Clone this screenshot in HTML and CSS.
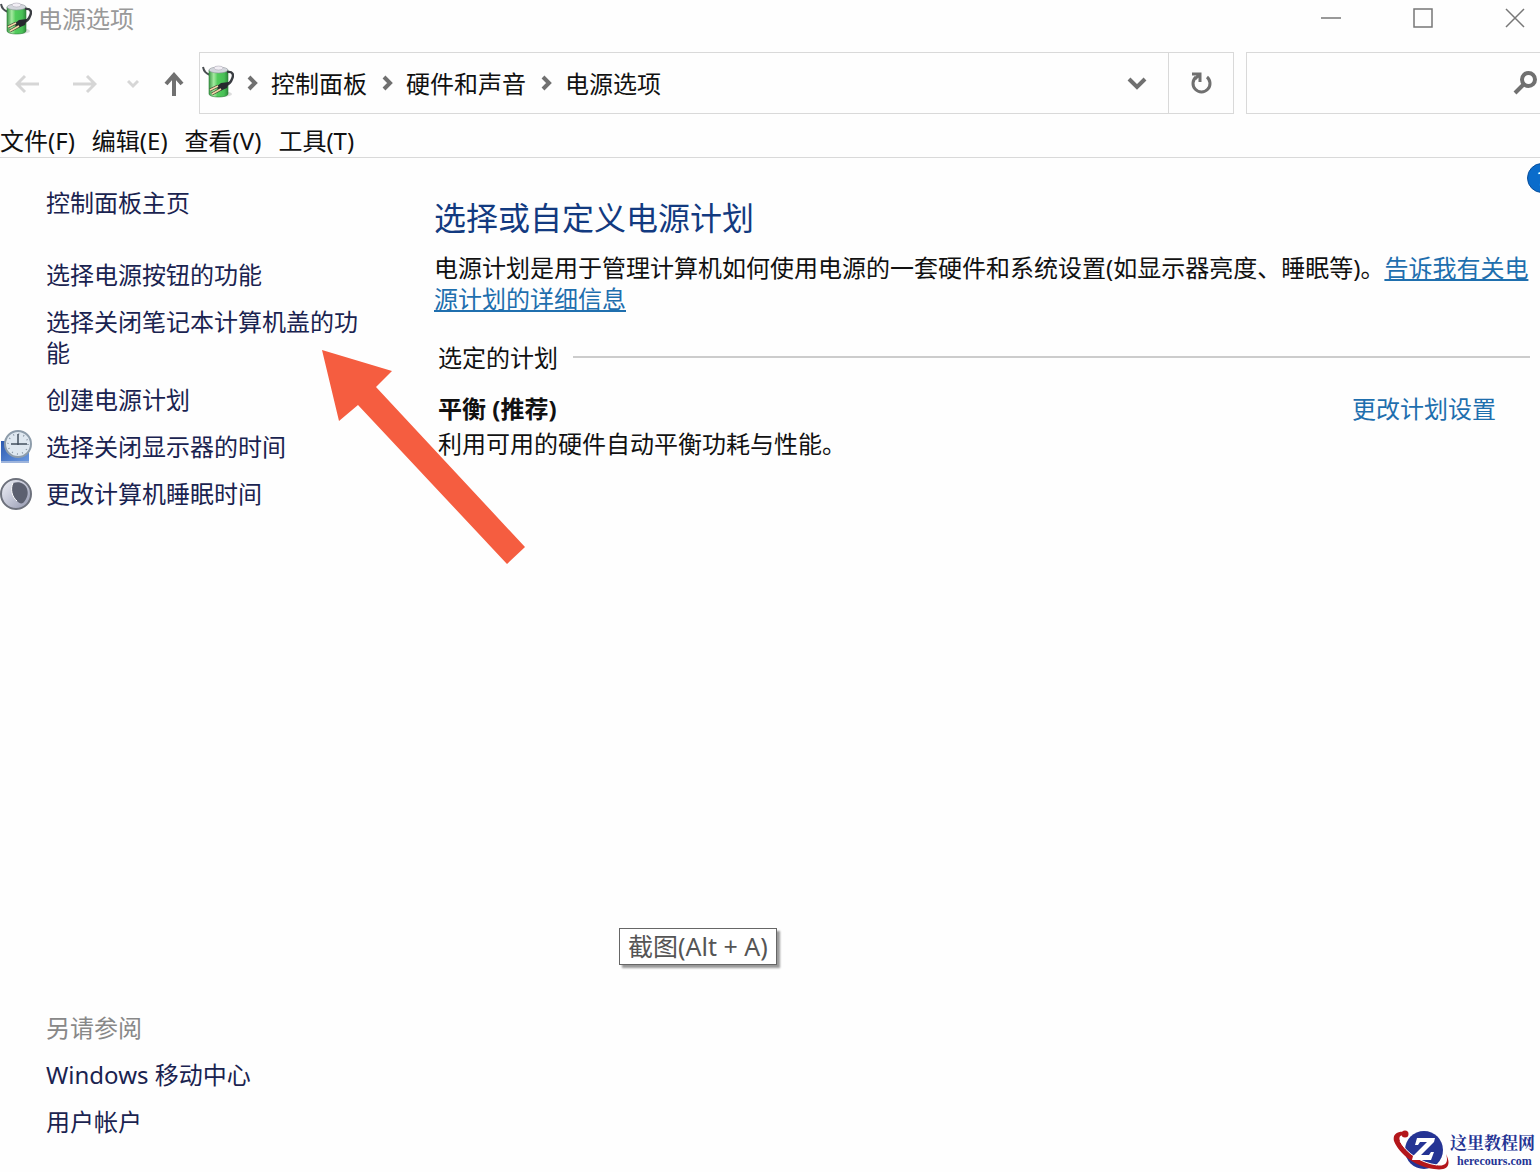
FILE: index.html
```html
<!DOCTYPE html>
<html lang="zh-CN">
<head>
    <meta charset="UTF-8">
    <title>电源选项</title>
    <link rel="stylesheet" href="styles.css">
</head>
<body>
    <!-- shared battery icon -->
    <svg class="defs" width="0" height="0" aria-hidden="true">
        <defs>
            <linearGradient id="cell" x1="0" x2="1" y1="0" y2="0">
                <stop offset="0" stop-color="#3d9a48"/>
                <stop offset="0.25" stop-color="#a5eaa0"/>
                <stop offset="0.45" stop-color="#52cc5c"/>
                <stop offset="0.8" stop-color="#48bf56"/>
                <stop offset="1" stop-color="#2c8a3a"/>
            </linearGradient>
            <linearGradient id="night" x1="0" x2="1" y1="0" y2="1">
                <stop offset="0" stop-color="#f2f3f8"/>
                <stop offset="0.5" stop-color="#c3c6d6"/>
                <stop offset="1" stop-color="#8f93aa"/>
            </linearGradient>
            <linearGradient id="screen" x1="0" x2="1" y1="0" y2="1">
                <stop offset="0" stop-color="#2a58b0"/>
                <stop offset="1" stop-color="#6d9be0"/>
            </linearGradient>
            <symbol id="battery" viewBox="0 0 32 34">
                <ellipse cx="20" cy="30" rx="10" ry="3" fill="#dcdcdc"/>
                <path d="M1 3C2 8 4 9 8 11" fill="none" stroke="#4a4e52" stroke-width="2"/>
                <path d="M7 6v24c0 4 19 4 19 0V6z" fill="url(#cell)" stroke="#2c8038" stroke-width="0.6"/>
                <ellipse cx="16.500" cy="6" rx="9.500" ry="3" fill="#d3d6dc" stroke="#8e949a" stroke-width="0.6"/>
                <ellipse cx="16.500" cy="4" rx="4.500" ry="2" fill="#f1eef4" stroke="#a7a3b0" stroke-width="0.5"/>
                <path d="M25 8C31 7 32 11 30 15C29 18 27 20 24 21" fill="none" stroke="#3a3d42" stroke-width="2.400"/>
                <path d="M27 18L25 24L18 27L14 23L19 19z" fill="#26282e"/>
                <path d="M16 22L8 26M19 25L10 30" stroke="#403a35" stroke-width="3"/>
                <path d="M16 22L8 26M19 25L10 30" stroke="#efd9a5" stroke-width="1.600"/>
            </symbol>
        </defs>
    </svg>

    <div class="window">
        <header class="titlebar">
            <svg class="app-icon"><use href="#battery"/></svg>
            <span class="title">电源选项</span>
            <div class="controls">
                <button class="control" aria-label="最小化"><svg width="22" height="22" viewBox="0 0 22 22"><path d="M1 11h20"/></svg></button>
                <button class="control" aria-label="最大化"><svg width="22" height="22" viewBox="0 0 22 22"><path d="M2 2h18v18H2z"/></svg></button>
                <button class="control" aria-label="关闭"><svg width="22" height="22" viewBox="0 0 22 22"><path d="M2 2l18 18M20 2L2 20"/></svg></button>
            </div>
        </header>

        <nav class="navbar">
            <div class="history">
                <button class="nav-btn faded" aria-label="后退"><svg width="24" height="20" viewBox="0 0 24 20"><path d="M24 10H3M10 2L2 10l8 8"/></svg></button>
                <button class="nav-btn faded" aria-label="前进"><svg width="24" height="20" viewBox="0 0 24 20"><path d="M0 10h21M14 2l8 8-8 8"/></svg></button>
                <button class="nav-btn faded" aria-label="最近位置"><svg width="12" height="10" viewBox="0 0 12 10"><path d="M1 2l5 5 5-5"/></svg></button>
                <button class="nav-btn up" aria-label="向上"><svg width="20" height="24" viewBox="0 0 20 24"><path d="M10 24V3M2 12l8-9 8 9"/></svg></button>
            </div>
            <div class="address">
                <svg class="app-icon"><use href="#battery"/></svg>
                <svg class="sep" width="12" height="16" viewBox="0 0 12 16"><path d="M3 2l6 6-6 6"/></svg>
                <a class="crumb" href="#">控制面板</a>
                <svg class="sep" width="12" height="16" viewBox="0 0 12 16"><path d="M3 2l6 6-6 6"/></svg>
                <a class="crumb" href="#">硬件和声音</a>
                <svg class="sep" width="12" height="16" viewBox="0 0 12 16"><path d="M3 2l6 6-6 6"/></svg>
                <a class="crumb" href="#">电源选项</a>
                <button class="drop" aria-label="展开"><svg width="20" height="14" viewBox="0 0 20 14"><path d="M2 3l8 8 8-8"/></svg></button>
                <button class="refresh" aria-label="刷新"><svg width="22" height="24" viewBox="0 0 22 24"><path d="M17 6a8.500 8.500 0 1 1-11 0"/><path d="M2 3h8v8M9 4L5 8"/></svg></button>
            </div>
            <div class="search">
                <input type="text" aria-label="搜索控制面板">
                <svg width="24" height="24" viewBox="0 0 24 24"><circle cx="15.500" cy="8.500" r="6.500"/><path d="M11 13L2 22"/></svg>
            </div>
        </nav>

        <div class="menubar">
            <button class="menu">文件(F)</button>
            <button class="menu">编辑(E)</button>
            <button class="menu">查看(V)</button>
            <button class="menu">工具(T)</button>
        </div>

        <div class="body">
            <aside class="sidebar">
                <a class="home" href="#">控制面板主页</a>
                <ul class="tasks">
                    <li><a href="#">选择电源按钮的功能</a></li>
                    <li><a href="#">选择关闭笔记本计算机盖的功能</a></li>
                    <li><a href="#">创建电源计划</a></li>
                    <li>
                        <svg class="task-icon" viewBox="0 0 32 34">
                            <path d="M1 11h28v21H1z" fill="url(#screen)"/>
                            <path d="M1 32h28" stroke="#9db4dc" stroke-width="2"/>
                            <circle cx="18" cy="14" r="13" fill="#dfe8f0" stroke="#8e9dab" stroke-width="2"/>
                            <circle cx="18" cy="14" r="10" fill="none" stroke="#8795a3" stroke-width="1.500" stroke-dasharray="1 4.236"/>
                            <path d="M18 4v11M11 14h16" stroke="#44505e" stroke-width="1.500"/>
                        </svg>
                        <a href="#">选择关闭显示器的时间</a>
                    </li>
                    <li>
                        <svg class="task-icon" viewBox="0 0 32 34">
                            <circle cx="16" cy="17" r="15" fill="url(#night)" stroke="#6d717c" stroke-width="2"/>
                            <path d="M13 6C25 2 31 14 26 22C23 28 20 27 17 24C12 20 10 12 13 6z" fill="#5c6070"/>
                            <path d="M13 6C10 12 12 20 17 24" fill="none" stroke="#fff" stroke-width="1"/>
                        </svg>
                        <a href="#">更改计算机睡眠时间</a>
                    </li>
                </ul>
                <div class="see-also">
                    <span class="see-title">另请参阅</span>
                    <a href="#">Windows 移动中心</a>
                    <a href="#">用户帐户</a>
                </div>
            </aside>

            <main class="content">
                <h1>选择或自定义电源计划</h1>
                <p class="intro">电源计划是用于管理计算机如何使用电源的一套硬件和系统设置(如显示器亮度、睡眠等)。<a href="#">告诉我有关电源计划的详细信息</a></p>
                <section class="plans">
                    <h2>选定的计划</h2>
                    <div class="plan">
                        <strong>平衡 (推荐)</strong>
                        <a href="#">更改计划设置</a>
                    </div>
                    <p>利用可用的硬件自动平衡功耗与性能。</p>
                </section>
            </main>
            <button class="help" aria-label="帮助">?</button>
        </div>

        <svg class="arrow" viewBox="0 0 204 216" aria-hidden="true">
            <path d="M0 0L70 21L54 37L203 197L185 214L36 55L17 71z" fill="#f55d40"/>
        </svg>

        <div class="tooltip" role="tooltip">截图(Alt + A)</div>

        <div class="brand">
            <svg width="58" height="42" viewBox="0 0 58 42" aria-hidden="true">
                <circle cx="32" cy="20" r="19" fill="#253494"/>
                <path d="M16 3C8 0 0 3 2 11C7 24 24 37 42 39C55 41 60 36 54 24C57 33 53 37 44 35C28 32 12 21 8 11C6 6 9 4 16 5z" fill="#b3161b"/>
                <path d="M8 11C14 23 29 33 45 35" fill="none" stroke="#fff" stroke-width="1"/>
                <circle cx="13" cy="4" r="3.500" fill="#b3161b"/>
                <path d="M25 8L43 8L42 12L29 25H37L39 22H42L39 30H20L21 26L35 12H28L26 15H23z" fill="#fff"/>
            </svg>
            <div class="brand-text">
                <span class="brand-name">这里教程网</span>
                <span class="brand-url">herecours.com</span>
            </div>
        </div>
    </div>
</body>
</html>
```

FILE: styles.css
```css
* {
    box-sizing: border-box;
}
body {
    margin: 0;
    font: 24px/31px "Noto Sans", "Noto Sans CJK SC", sans-serif;
    color: #111;
    background: #fefefe;
}
a {
    color: inherit;
    text-decoration: none;
}
button {
    display: flex;
    align-items: center;
    justify-content: center;
    padding: 0;
    border: 0;
    font: inherit;
    color: inherit;
    background: none;
}
h1, h2, p, ul {
    margin: 0;
    padding: 0;
    font-weight: normal;
}
svg {
    flex: none;
}
.defs {
    position: absolute;
}
.window {
    position: relative;
    display: flex;
    flex-direction: column;
    min-height: 100vh;
    overflow: hidden;
}

/* title bar */
.titlebar {
    display: flex;
    align-items: center;
    height: 36px;
}
.app-icon {
    width: 32px;
    height: 34px;
}
.title {
    margin-left: 6px;
    color: #999;
}
.controls {
    display: flex;
    gap: 70px;
    margin-left: auto;
    padding-right: 14px;
}
.control path {
    fill: none;
    stroke: #777;
    stroke-width: 1.5;
}

/* navigation */
.navbar {
    display: flex;
    height: 62px;
    margin-top: 16px;
}
.history {
    display: flex;
    align-items: center;
    width: 199px;
    padding: 2px 0 0 15px;
}
.nav-btn {
    margin-right: 34px;
}
.nav-btn:nth-child(2) {
    margin-right: 30px;
}
.nav-btn:nth-child(3) {
    margin-right: 25px;
}
.nav-btn.up {
    margin: 0;
}
.nav-btn path, .sep path, .drop path, .refresh path, .search svg {
    fill: none;
    stroke: #707070;
    stroke-width: 4;
}
.nav-btn.faded path {
    stroke: #d6d6d6;
    stroke-width: 3;
}
.refresh path {
    stroke-width: 3;
}
.address {
    display: flex;
    flex: 1;
    align-items: center;
    padding-left: 2px;
    border: 1px solid #d9d9d9;
}
.sep {
    margin: 0 13px 0 12px;
}
.crumb + .sep {
    margin: 0 13px 0 14px;
}
.address .app-icon {
    margin-bottom: 4px;
}
.drop {
    width: 62px;
    height: 100%;
    margin-left: auto;
}
.refresh {
    width: 65px;
    height: 100%;
    border-left: 1px solid #d9d9d9;
}
.search {
    display: flex;
    align-items: center;
    width: 294px;
    margin-left: 12px;
    padding-right: 3px;
    border: 1px solid #d9d9d9;
    border-right: 0;
}
.search input {
    flex: 1;
    min-width: 0;
    height: 100%;
    border: 0;
    outline: 0;
    font: inherit;
    background: none;
}
.menubar {
    display: flex;
    gap: 17px;
    height: 44px;
    padding-top: 10px;
    border-bottom: 1px solid #d9d9d9;
}

/* page */
.body {
    position: relative;
    display: flex;
    flex: 1;
}
.sidebar {
    display: flex;
    flex-direction: column;
    width: 434px;
    padding: 29px 64px 35px 46px;
    color: #1a2350;
}
.tasks {
    display: flex;
    flex-direction: column;
    gap: 16px;
    margin-top: 41px;
    list-style: none;
}
.tasks li {
    display: flex;
    align-items: center;
}
.task-icon {
    width: 32px;
    height: 34px;
    margin: -1px 14px -2px -46px;
}
.see-also {
    display: flex;
    flex-direction: column;
    gap: 16px;
    margin-top: auto;
}
.see-title {
    color: #888;
}
.content {
    flex: 1;
    padding: 40px 10px 0 0;
}
h1 {
    font-size: 32px;
    line-height: 40px;
    color: #123a80;
}
.intro {
    margin-top: 14px;
}
.content a {
    color: #1f6fae;
}
.intro a {
    text-decoration: underline;
}
.plans {
    padding-left: 4px;
}
h2 {
    display: flex;
    align-items: center;
    gap: 15px;
    margin-top: 28px;
    font-size: 24px;
}
h2::after {
    flex: 1;
    height: 2px;
    margin-bottom: 2px;
    background: #ccc;
    content: "";
}
.plan {
    display: flex;
    justify-content: space-between;
    margin-top: 20px;
    padding-right: 34px;
}
.plan + p {
    margin-top: 4px;
}
.help {
    position: absolute;
    top: 5px;
    right: -17px;
    width: 30px;
    height: 30px;
    border: 1px solid #0a4f9c;
    border-radius: 50%;
    font-size: 20px;
    color: #fff;
    background: #0a6ccb;
}

/* overlays */
.arrow {
    position: absolute;
    top: 350px;
    left: 322px;
    width: 204px;
    height: 216px;
}
.tooltip {
    position: absolute;
    top: 928px;
    left: 619px;
    padding: 2px 8px;
    border: 1px solid #666;
    font-size: 25px;
    color: #555;
    background: #fff;
    box-shadow: 3px 3px 2px #999;
}
.brand {
    position: absolute;
    right: 5px;
    bottom: 0;
    display: flex;
    align-items: center;
}
.brand-text {
    display: flex;
    flex-direction: column;
    color: #253494;
    font-family: "Liberation Serif", "Noto Serif CJK SC", "Noto Sans CJK SC", serif;
    font-weight: bold;
}
.brand-name {
    font-size: 17px;
    line-height: 20px;
}
.brand-url {
    padding-left: 7px;
    font-size: 12px;
    line-height: 14px;
}
```
